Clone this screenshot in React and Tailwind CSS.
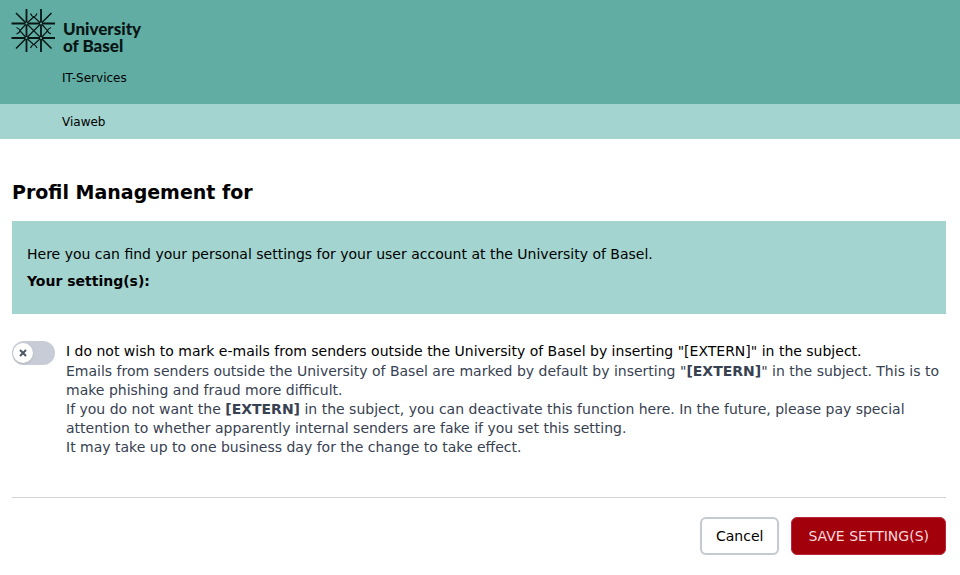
import { useState } from "react";

function UniLogo() {
  return (
    <svg className="w-11 h-11 shrink-0" viewBox="0 0 44 44" fill="none" stroke="#071513" aria-hidden="true">
      <g strokeWidth="1.8">
        <path d="M15.500 1v43M30 1v43M.5 15.500h43.500M.5 30h43.500" />
      </g>
      <g strokeWidth="1.5">
        <path d="M5 5l10.500 10.500M40.500 5L30 15.500M5 40.500L15.500 30M40.500 40.500L30 30" />
      </g>
      {/* rays between the four stars, bent where they meet */}
      <g strokeWidth="1.2">
        <path d="M15.500 15.500L30 30M30 15.500L15.500 30" />
        <path d="M15.500 15.500L22 9.500Q25 8.500 26 5.500M30 15.500L23.500 9.500Q20.500 8.500 19.500 5.500" />
        <path d="M15.500 30L22 36Q25 37 26 40M30 30L23.500 36Q20.500 37 19.500 40" />
        <path d="M15.500 15.500L9.500 22Q8.500 25 5.500 26M15.500 30L9.500 23.500Q8.500 20.500 5.500 19.500" />
        <path d="M30 15.500L36 22Q37 25 40 26M30 30L36 23.500Q37 20.500 40 19.500" />
      </g>
      <g fill="#61aca3" stroke="none">
        <circle cx="15.500" cy="15.500" r="1.1" />
        <circle cx="30" cy="15.500" r="1.1" />
        <circle cx="15.500" cy="30" r="1.1" />
        <circle cx="30" cy="30" r="1.1" />
      </g>
    </svg>
  );
}

function Toggle({ id, checked, onChange }) {
  return (
    <span className="relative flex h-6 w-[43px] shrink-0">
      <input
        id={id}
        type="checkbox"
        checked={checked}
        onChange={(e) => onChange(e.target.checked)}
        className="peer h-6 w-full cursor-pointer appearance-none rounded-full bg-[#c8ccd6] checked:bg-[#61aca3]"
      />
      <span className="pointer-events-none absolute top-0.5 left-px flex size-5 items-center justify-center rounded-full bg-white shadow-sm peer-checked:left-[21px]">
        <svg className="size-2" viewBox="0 0 8 8" stroke="#4b5563" strokeWidth="2" aria-hidden="true">
          <path d="M1 1l6 6M7 1L1 7" />
        </svg>
      </span>
    </span>
  );
}

export default function App() {
  const [unmarked, setUnmarked] = useState(false);

  return (
    <div className="bg-white font-['DejaVu_Sans',sans-serif] text-sm text-black">
      <header>
        <div className="h-26 bg-[#61aca3] pt-2 pl-[11px]">
          <div className="flex gap-2">
            <UniLogo />
            <div className="pt-3 font-['Lato',sans-serif] text-[17px] leading-[17px] font-black text-[#071513]">
              University
              <br />
              of Basel
            </div>
          </div>
          <a href="#it" className="mt-4 ml-[51px] block w-fit text-xs leading-4">IT-Services</a>
        </div>
        <nav className="flex h-[35px] items-center bg-[#a3d4cf] pl-[62px]">
          <a href="#viaweb" className="text-xs leading-4">Viaweb</a>
        </nav>
      </header>

      <main className="pt-[39px] pr-3.5 pl-3">
        <h1 className="text-[19px] leading-7 font-bold">Profil Management for</h1>

        <section className="mt-[15px] h-[93px] bg-[#a3d4cf] px-[15px] pt-[23px]">
          <p className="leading-5">
            Here you can find your personal settings for your user account at the University of Basel.
          </p>
          <p className="mt-[7px] leading-5 font-bold">Your setting(s):</p>
        </section>

        <div className="mt-[27px] flex gap-[11px]">
          <Toggle id="extern" checked={unmarked} onChange={setUnmarked} />
          <div className="leading-5">
            <label htmlFor="extern" className="block">
              I do not wish to mark e-mails from senders outside the University of Basel by inserting "[EXTERN]" in the subject.
            </label>
            <div className="mt-px leading-[19px] text-[#374151]">
              <p>
                Emails from senders outside the University of Basel are marked by default by inserting "<b>[EXTERN]</b>" in the subject. This is to make phishing and fraud more difficult.
              </p>
              <p>
                If you do not want the <b>[EXTERN]</b> in the subject, you can deactivate this function here. In the future, please pay special attention to whether apparently internal senders are fake if you set this setting.
              </p>
              <p>It may take up to one business day for the change to take effect.</p>
            </div>
          </div>
        </div>

        <div className="mt-10 flex justify-end gap-3 border-t border-[#d1d5db] pt-[19px]">
          <button type="button" className="h-[38px] rounded-md border-2 border-[#c5cad2] bg-white px-3.5 shadow-xs">
            Cancel
          </button>
          <button type="button" className="h-[38px] rounded-md border border-[#b8283a] bg-[#a2000b] px-4 text-[#f7d9dc]">
            SAVE SETTING(S)
          </button>
        </div>
      </main>
    </div>
  );
}
